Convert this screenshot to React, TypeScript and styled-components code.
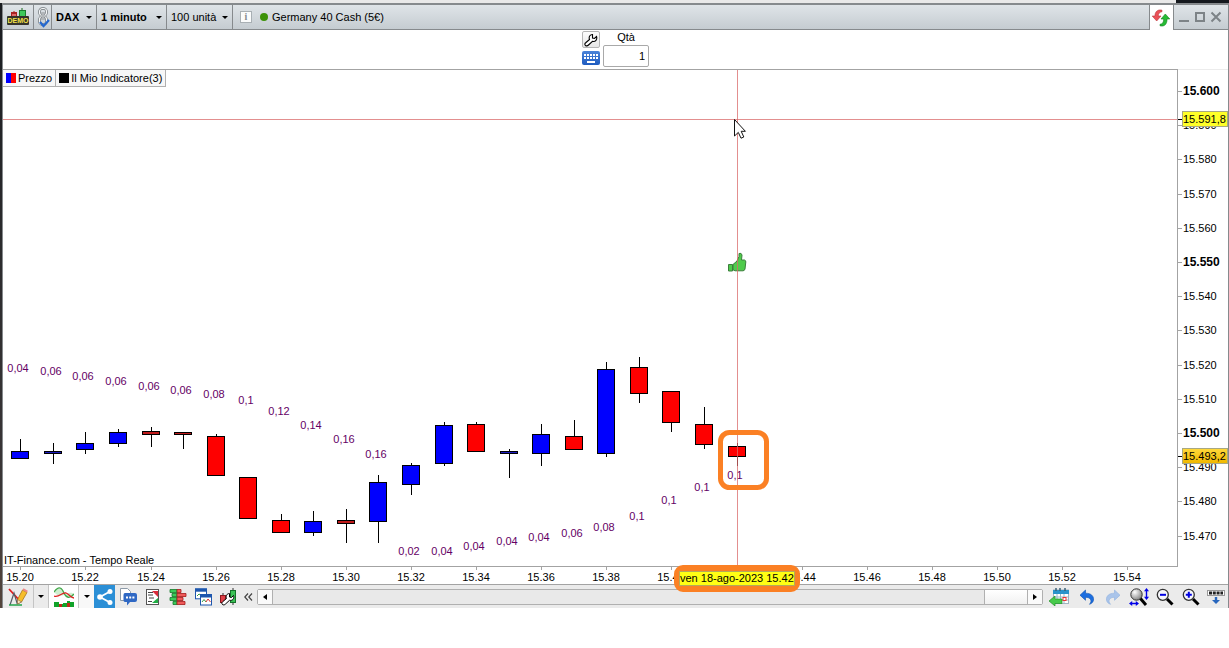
import React from "react";
import styled, { createGlobalStyle, css } from "styled-components";

const GlobalStyle = createGlobalStyle`
  *, *::before, *::after { box-sizing: border-box; }
  body {
    margin: 0;
    background: #fff;
    color: #000;
    font: 11px/14px "Liberation Sans", Arial, sans-serif;
  }
  button, input, select { font: inherit; color: inherit; }
  svg { display: block; flex: none; }
`;

const line = "#a3a3a3";
const frame = "#868a8d";

/* ---------- window ---------- */

const Desktop = styled.div`
  padding-left: 2px;
  background: linear-gradient(#1a1c20, #2b2b2d 40%, #3a3637 80%, #54453c) left / 2px 100% no-repeat;
`;

const TopStrip = styled.div`
  height: 3px;
  margin-left: -2px;
  background: linear-gradient(90deg, #e9e9e9 calc(100% - 53px), #15191e 0);
`;

const Window = styled.main`
  border: solid ${frame};
  border-width: 2px 1px 0;
  background: #fff;
`;

const Header = styled.header`
  display: flex;
  height: 25px;
`;

const headerCell = css`
  display: flex;
  align-items: center;
  border: 0 solid ${frame};
  border-width: 0 1px 1px 0;
  background: linear-gradient(#dfe4e8, #c5ccd1);
`;

const HeaderButton = styled.button<{ $width: number }>`
  ${headerCell}
  justify-content: center;
  width: ${(p) => p.$width}px;
  padding: 0;
`;

const SelectCell = styled.label<{ $width: number }>`
  ${headerCell}
  width: ${(p) => p.$width}px;
  padding: 0 4px;
`;

const Select = styled.select<{ $bold?: boolean }>`
  flex: 1;
  min-width: 0;
  padding: 0;
  border: 0;
  background: transparent;
  appearance: none;
  font-weight: ${(p) => (p.$bold ? 700 : 400)};
`;

const Instrument = styled.div`
  ${headerCell}
  flex: 1;
  padding-left: 7px;
`;

const InstrumentName = styled.span`
  margin-left: 4px;
`;

const StatusDot = styled.span`
  width: 8px;
  height: 8px;
  margin-left: 8px;
  border-radius: 50%;
  background: #3c9208;
`;

const InfoButton = styled.button`
  width: 12px;
  height: 12px;
  padding: 0;
  border: 1px solid #a9b0b4;
  background: #fbfcfc;
  color: #858b8f;
  font: bold 10px/10px "Liberation Serif", serif;
`;

const RefreshTab = styled.button`
  width: 24px;
  padding: 0 2px;
  border: 0;
  border-right: 1px solid ${frame};
  background: #fff;
`;

const WindowControls = styled.div`
  ${headerCell}
  border-right: 0;
  gap: 4px;
  padding: 0 6px 0 4px;
`;

const ControlButton = styled.button`
  padding: 0;
  border: 0;
  background: transparent;
`;

/* ---------- order bar ---------- */

const OrderBar = styled.section`
  display: flex;
  justify-content: center;
  gap: 3px;
  height: 39px;
`;

const OrderTools = styled.div`
  display: flex;
  flex-direction: column;
  gap: 3px;
  padding-top: 1px;
`;

const SettingsButton = styled.button`
  width: 18px;
  height: 17px;
  padding: 0;
  border: 1px solid #b5b5b5;
  border-radius: 2px;
  background: linear-gradient(#fdfdfd, #e6e6e6);
`;

const KeyboardButton = styled.button`
  width: 18px;
  height: 14px;
  padding: 0;
  border: 0;
  border-radius: 2px;
  background: linear-gradient(#4a83d8, #1f5cc0);
`;

const Quantity = styled.label`
  display: flex;
  flex-direction: column;
  align-items: center;
  gap: 1px;
  width: 46px;
`;

const QuantityInput = styled.input`
  width: 100%;
  height: 22px;
  padding: 0 3px;
  border: 1px solid #a9a9a9;
  border-radius: 2px;
  text-align: right;
`;

/* ---------- chart ---------- */

const ChartArea = styled.section`
  display: grid;
  grid-template-columns: minmax(0, 1fr) 50px;
`;

const Plot = styled.div`
  position: relative;
  border: solid ${line};
  border-width: 1px 1px 1px 0;
`;

const Legend = styled.div`
  position: absolute;
  top: 0;
  left: 0;
  display: flex;
`;

const LegendItem = styled.span`
  display: flex;
  align-items: center;
  gap: 2px;
  height: 17px;
  padding: 0 3px;
  border: solid #b0b0b0;
  border-width: 0 1px 1px 0;
  background: #f7f7f7;
`;

const Swatch = styled.i<{ $fill: string }>`
  width: 10px;
  height: 10px;
  background: ${(p) => p.$fill};
`;

const Credit = styled.span`
  position: absolute;
  left: 1px;
  bottom: -1px;
`;

const PriceAxis = styled.div`
  position: relative;
  border-top: 1px solid #ececec;
`;

const PriceTag = styled.output<{ $top: number; $fill: string }>`
  position: absolute;
  top: ${(p) => p.$top}px;
  left: 4px;
  right: 0;
  height: 16px;
  border: 1px solid #a8a882;
  background: ${(p) => p.$fill};
  line-height: 14px;
`;

const TimeAxis = styled.div`
  position: relative;
  grid-column: 1 / -1;
`;

const MarkedDate = styled.div`
  position: absolute;
  z-index: 1;
  top: -2px;
  left: 671px;
  padding: 1px 0;
  border: 5px solid #fb8024;
  border-radius: 9px;
  background: #fb8024;
`;

const DateTag = styled.output`
  display: block;
  height: 15px;
  border: 1px solid #b4a95a;
  background: #ffff14;
  line-height: 13px;
  white-space: nowrap;
`;

const AxisText = styled.text<{ $major?: boolean }>`
  font-family: "Liberation Sans", Arial, sans-serif;
  font-size: ${(p) => (p.$major ? 12 : 11)}px;
  font-weight: ${(p) => (p.$major ? 700 : 400)};
`;

const ValueText = styled.text`
  font-family: "Liberation Sans", Arial, sans-serif;
  font-size: 11px;
  fill: #650065;
  text-anchor: middle;
`;

/* ---------- bottom toolbar ---------- */

const Toolbar = styled.footer`
  display: flex;
  height: 24px;
  border-top: 1px solid ${line};
  background: #ebebeb;
`;

const ToolButton = styled.button<{ $width?: number; $fill?: string; $split?: boolean }>`
  display: flex;
  flex: none;
  align-items: center;
  justify-content: center;
  width: ${(p) => p.$width ?? 26}px;
  padding: 0;
  border: 0 solid #c4c4c4;
  border-right-width: ${(p) => (p.$split ? 1 : 0)}px;
  background: ${(p) => p.$fill ?? "transparent"};
`;

const ScrollBar = styled.div`
  display: flex;
  flex: 1;
  height: 16px;
  margin: 4px 1px;
  border: 1px solid #b0b0b0;
  border-radius: 2px;
  background: #e9e9e9;
`;

const ScrollButton = styled.button`
  display: flex;
  align-items: center;
  justify-content: center;
  width: 14px;
  padding: 0;
  border: 0;
  background: #fafafa;
`;

const ScrollTrack = styled.div`
  display: flex;
  flex: 1;
  justify-content: flex-end;
  border: solid #b0b0b0;
  border-width: 0 1px;
`;

const ScrollThumb = styled.div`
  width: 43px;
  border-left: 1px solid #b0b0b0;
  background: linear-gradient(#fff, #f1f1f1);
`;

/* ---------- data ---------- */

type Candle = {
  x: number;
  high: number;
  top: number;
  bottom: number;
  low: number;
  up: boolean;
  value: string;
  valueY: number;
};

const row = (
  x: number, high: number, top: number, bottom: number, low: number,
  up: boolean, value: string, valueY: number,
): Candle => ({ x, high, top, bottom, low, up, value, valueY });

const candles: Candle[] = [
  row(17, 369, 381, 389, 389, true, "0,04", 302),
  row(50, 373, 381, 384, 394, true, "0,06", 305),
  row(82, 362, 373, 380, 384, true, "0,06", 310),
  row(115, 359, 362, 374, 377, true, "0,06", 315),
  row(148, 357, 361, 365, 377, false, "0,06", 320),
  row(180, 362, 362, 365, 379, false, "0,06", 324),
  row(213, 364, 366, 406, 406, false, "0,08", 328),
  row(245, 407, 407, 449, 449, false, "0,1", 334),
  row(278, 444, 450, 463, 463, false, "0,12", 345),
  row(310, 441, 451, 463, 466, true, "0,14", 359),
  row(343, 439, 450, 454, 473, false, "0,16", 373),
  row(375, 405, 412, 452, 473, true, "0,16", 388),
  row(408, 393, 395, 415, 425, true, "0,02", 485),
  row(441, 352, 355, 394, 396, true, "0,04", 485),
  row(473, 352, 354, 382, 382, false, "0,04", 480),
  row(506, 379, 381, 384, 408, true, "0,04", 475),
  row(538, 354, 364, 384, 396, true, "0,04", 471),
  row(571, 350, 366, 380, 380, false, "0,06", 467),
  row(603, 292, 299, 384, 387, true, "0,08", 461),
  row(636, 287, 297, 324, 333, false, "0,1", 450),
  row(668, 321, 321, 353, 362, false, "0,1", 434),
  row(701, 337, 354, 375, 379, false, "0,1", 421),
  row(734, 373, 376, 387, 396, false, "0,1", 409),
];

const prices: [string, number][] = [
  ["15.600", 21], ["15.590", 55], ["15.580", 89], ["15.570", 124],
  ["15.560", 158], ["15.550", 192], ["15.540", 226], ["15.530", 260],
  ["15.520", 295], ["15.510", 329], ["15.500", 363], ["15.490", 397],
  ["15.480", 431], ["15.470", 466],
];

const majorPrices = ["15.600", "15.550", "15.500"];

const times: [string, number][] = [
  ["15.20", 17], ["15.22", 82], ["15.24", 148], ["15.26", 213], ["15.28", 278],
  ["15.30", 343], ["15.32", 408], ["15.34", 473], ["15.36", 538], ["15.38", 603],
  ["15.40", 668], ["15.44", 799], ["15.46", 864], ["15.48", 929], ["15.50", 994],
  ["15.52", 1059], ["15.54", 1124],
];

/* ---------- icons ---------- */

const Caret = () => (
  <svg width="6" height="3" aria-hidden="true"><path d="M0 0h6L3 3z" /></svg>
);

const DemoIcon = () => (
  <svg width="24" height="18" viewBox="0 0 24 18" aria-hidden="true">
    <path d="M5 4.500h6M8 3v2" stroke="#a22" />
    <rect x="5.500" y="5.500" width="5" height="4" fill="#e06a6a" stroke="#a22" />
    <path d="M16 0v3" stroke="#1b6b1b" />
    <rect x="13.500" y="2.500" width="6" height="7" fill="#3fc95a" stroke="#1d7c2f" />
    <rect x="1" y="8" width="22" height="9" rx="1" fill="#35332b" />
    <text x="12" y="15" textAnchor="middle" fill="#f3e34a" fontFamily="Liberation Sans" fontWeight="700" fontSize="7">DEMO</text>
  </svg>
);

const LinkIcon = () => (
  <svg width="14" height="22" viewBox="0 0 14 22" fill="none" aria-hidden="true">
    <rect x="3.500" y="2.500" width="7" height="7" rx="3" stroke="#70767a" strokeWidth="2.600" />
    <rect x="3.500" y="10.500" width="7" height="8" rx="3" stroke="#70767a" strokeWidth="2.600" />
    <rect x="3.500" y="2.500" width="7" height="7" rx="3" stroke="#f4f6f7" strokeWidth="1.200" />
    <rect x="3.500" y="10.500" width="7" height="8" rx="3" stroke="#f4f6f7" strokeWidth="1.200" />
    <path d="M7 6v8" stroke="#70767a" strokeWidth="2.600" />
    <path d="M7 6v8" stroke="#f4f6f7" />
    <path d="M4 16l3.500 4L13 14" stroke="#2468cf" strokeWidth="2.200" />
  </svg>
);

const RefreshIcon = () => (
  <svg width="18" height="18" viewBox="0 0 18 18" aria-hidden="true">
    <path d="M10 1.200C5.500 0 2.800 3 3 7H.2l4.500 5L9 7H6.300C6.200 5 7.300 3 10 2.700z" fill="#ea5158" stroke="#b9373d" strokeWidth=".6" />
    <path d="M8 16.800c4.500 1.200 7.200-1.800 7-6.800h2.800l-4.500-5L9 10h2.700c.1 3-1 5-3.700 5.300z" fill="#26bb34" stroke="#138020" strokeWidth=".6" />
  </svg>
);

const ControlIcon = ({ d }: { d: string }) => (
  <svg width="12" height="12" viewBox="0 0 12 12" fill="none" stroke="#7d8387" strokeWidth="2" aria-hidden="true"><path d={d} /></svg>
);

const wrenchPath = "M2.500 13.500c-1-1-.8-2 .2-2.800L6.500 7.500C5.500 4.800 7 2.500 9.500 2.500V6l2 .5L13.500 4.500c1 3-1 5.500-4 4.800L5.500 13c-1 1-2 1.200-3 .5z";

const WrenchIcon = () => (
  <svg width="16" height="15" viewBox="0 0 16 15" aria-hidden="true">
    <path d={wrenchPath} fill="#fff" stroke="#000" strokeWidth="1.100" />
  </svg>
);

const KeyboardIcon = () => (
  <svg width="18" height="14" viewBox="0 0 18 14" stroke="#fff" strokeWidth="2" aria-hidden="true">
    <path d="M2 4h14M2 7h14" strokeDasharray="2 1" /><path d="M5 11h8" />
  </svg>
);

const PencilIcon = () => (
  <svg width="20" height="20" viewBox="0 0 20 20" fill="none" aria-hidden="true">
    <path d="M1 2l11 12" stroke="#e01b1b" strokeWidth="1.800" />
    <path d="M2 18L6 6l3 10 4-7" stroke="#555d66" strokeWidth="1.200" />
    <path d="M1 18h13" stroke="#20a44a" strokeWidth="1.500" />
    <path d="M9.500 12.500L14.500 3l4.500 2.500-5.500 9.500-4 2z" fill="#f6bd2a" stroke="#a8741a" strokeWidth=".8" />
    <path d="M14.500 3l1-1.800 4.300 2.500L19 5.500z" fill="#e88" />
    <path d="M9.500 12.500v4.500l4-2z" fill="#fbe3bd" stroke="#654" strokeWidth=".5" />
  </svg>
);

const IndicatorIcon = () => (
  <svg width="20" height="20" viewBox="0 0 20 20" fill="none" aria-hidden="true">
    <path d="M0 5c5-7 8-4 10 1s6 6 10 2v-1c-4-3-7 0-10 1S4 10 0 5z" fill="#cfeed0" />
    <path d="M0 5c5-7 8-4 10 1s6 6 10 1" stroke="#42a84a" strokeWidth="1.300" />
    <path d="M0 9c5 2 8-4 12-3 3 1 4 4 8 5" stroke="#d22" strokeWidth="1.300" />
    <path d="M0 20v-5h5v2h4v-1h4v-2h3v1h4v5z" fill="#12a32a" />
    <path d="M5 20v-3h3v3zM13 20v-4h3v4z" fill="#c02a1c" />
  </svg>
);

const ShareIcon = () => (
  <svg width="18" height="18" viewBox="0 0 18 18" aria-hidden="true">
    <path d="M14 3.500L4 9l10 5.500" fill="none" stroke="#fff" strokeWidth="1.800" />
    <circle cx="4" cy="9" r="2.800" fill="#fff" /><circle cx="14" cy="3.500" r="2.500" fill="#fff" /><circle cx="14" cy="14.500" r="2.500" fill="#fff" />
  </svg>
);

const ChatIcon = () => (
  <svg width="18" height="18" viewBox="0 0 18 18" aria-hidden="true">
    <path d="M1.500.5h7l3 3v9h-10z" fill="#fff" stroke="#8d9aa8" />
    <path d="M6 5h10q2 0 2 2v5q0 2-2 2h-5l-3 3.500V14H6q-1.500 0-1.500-2V7Q4.500 5 6 5z" fill="#2f68c4" />
    <path d="M7 9.500h8.500" stroke="#fff" strokeWidth="2" strokeDasharray="2 1.200" />
  </svg>
);

const ReportIcon = () => (
  <svg width="14" height="16" viewBox="0 0 14 16" aria-hidden="true">
    <rect x=".5" y=".5" width="12" height="15" fill="#fff" stroke="#555" />
    <path d="M2 3.500h5M2 6h5M3 9h5M2 12.500h4" stroke="#444" />
    <path d="M6 2h6v6L9.500 5.500z" fill="#da2b3a" />
    <path d="M6 14h6V9l-2.500 2z" fill="#1fae44" />
  </svg>
);

const DepthIcon = () => (
  <svg width="18" height="18" viewBox="0 0 18 18" strokeWidth=".8" aria-hidden="true">
    <path d="M1 1.500h7v3H1zM3 5.500h5v3H3zM1 9.500h7v3H1zM4 13.500h4v3H4z" fill="#3acb5a" stroke="#137a2a" />
    <path d="M8 1.500h4v3H8zM8 5.500h9v3H8zM8 9.500h6v3H8zM8 13.500h8v3H8z" fill="#ef5a5a" stroke="#a31b1b" />
  </svg>
);

const WindowsIcon = () => (
  <svg width="19" height="18" viewBox="0 0 19 18" fill="none" aria-hidden="true">
    <rect x="1.500" y=".8" width="11" height="10" fill="#fff" stroke="#1e57ae" />
    <path d="M1 2.200h12" stroke="#1e57ae" strokeWidth="3" />
    <path d="M3 8l2-2 3 2" stroke="#3a9a46" />
    <rect x="6.500" y="6.500" width="11" height="10.500" fill="#fff" stroke="#1e57ae" />
    <path d="M6 8h12" stroke="#1e57ae" strokeWidth="3" />
    <path d="M8 14l2-2.500 2 2.500" stroke="#3a9a46" /><path d="M12 14l2-3 2.500 3" stroke="#d33" />
  </svg>
);

const CandleWrenchIcon = () => (
  <svg width="18" height="18" viewBox="0 0 18 18" aria-hidden="true">
    <path d="M4 5v12M14 0v17" stroke="#333" />
    <rect x="1.500" y="7.500" width="5" height="7" fill="#e03e46" stroke="#8b1a1f" />
    <rect x="11.500" y="2.500" width="5" height="12" fill="#3ac356" stroke="#15702a" />
    <path d={wrenchPath} transform="translate(1 3)" fill="#fff" stroke="#000" />
  </svg>
);

const CollapseIcon = () => (
  <svg width="9" height="8" viewBox="0 0 9 8" fill="none" stroke="#444" aria-hidden="true">
    <path d="M4 .5L.8 4 4 7.500M8 .5L4.800 4 8 7.500" strokeWidth="1.200" />
  </svg>
);

const CalendarIcon = () => (
  <svg width="20" height="18" viewBox="0 0 20 18" aria-hidden="true">
    <rect x="4.500" y="2" width="15" height="13.500" fill="#fff" stroke="#9fb4c2" />
    <path d="M4 2h16v4H4z" fill="#2a93cb" />
    <path d="M7 0v3M11 0v3M16 0v3" stroke="#3b6077" strokeWidth="1.500" />
    <path d="M5 9h14M5 12h14M8 6v9M11.500 6v9M15 6v9" stroke="#9ab8c8" />
    <rect x="14" y="9.500" width="3" height="3" fill="#fff" stroke="#e33" />
    <path d="M0 13l6-5v3h7v4.500H6V18z" fill="#47ca4c" stroke="#239229" strokeWidth=".7" />
  </svg>
);

const UndoIcon = ({ redo }: { redo?: boolean }) => (
  <svg width="16" height="16" viewBox="0 0 16 16" aria-hidden="true">
    <path
      d="M1 6.200L6.500 1v3.200C12 4.200 15 7 14.500 11c-.3 2-1.700 3.600-4 4.300 1.500-1.800 1.900-3.300 1-4.800C10.700 9 9 8.300 6.500 8.300v3z"
      transform={redo ? "matrix(-1 0 0 1 16 0)" : undefined}
      fill={redo ? "#a9c4ea" : "#1c6ee0"}
      stroke={redo ? "#8fb0df" : "#0c4fae"}
      strokeWidth=".6"
    />
  </svg>
);

const ZoomIcon = ({ sign }: { sign: string }) => (
  <svg width="18" height="18" viewBox="0 0 18 18" fill="none" aria-hidden="true">
    <path d="M11 11l5.500 5.500" stroke="#000" strokeWidth="3" />
    <circle cx="6.800" cy="6.800" r="5.500" fill="#f6f6fa" stroke="#333" strokeWidth="1.300" />
    <path d={sign} stroke="#0000e0" strokeWidth="2" />
  </svg>
);

const ZoomFitIcon = () => (
  <svg width="20" height="18" viewBox="0 0 20 18" fill="none" aria-hidden="true">
    <defs>
      <radialGradient id="lens" cx=".35" cy=".3" r=".8">
        <stop offset="0" stopColor="#fff" /><stop offset="1" stopColor="#777" />
      </radialGradient>
    </defs>
    <path d="M11 10l6 7" stroke="#000" strokeWidth="3" />
    <circle cx="7.500" cy="6.500" r="5.700" fill="url(#lens)" stroke="#333" />
    <path d="M17.500 2v8M2 15.500h6" stroke="#0000e8" strokeWidth="1.400" />
    <path d="M17.500 0l2.500 3.200h-5zM17.500 12l2.500-3.200h-5zM0 15.500L3.200 13v5zM10 15.500L6.800 13v5z" fill="#0000e8" />
  </svg>
);

const KeypadIcon = () => (
  <svg width="18" height="16" viewBox="0 0 18 16" aria-hidden="true">
    <rect x=".5" y="1.500" width="17" height="5" fill="#fff" stroke="#999" />
    <path d="M2 4h14" stroke="#222" strokeWidth="3" strokeDasharray="3 .8" />
    <path d="M7.800 8h2.400v3h2.800L9 15l-4-4h2.800z" fill="#2867be" />
  </svg>
);

/* ---------- views ---------- */

function CandleShape({ x, high, top, bottom, low, up }: Candle) {
  const thin = bottom - top < 5;
  const fill = up ? (thin ? "#1b1bc0" : "#0000fe") : thin ? "#c01b1b" : "#fe0000";
  return (
    <g stroke="#000" shapeRendering="crispEdges">
      <line x1={x + 0.5} x2={x + 0.5} y1={high} y2={low} />
      <rect x={x - 8.5} y={top + 0.5} width={17} height={bottom - top - 1} fill={fill} />
    </g>
  );
}

function PlotDrawing() {
  return (
    <svg width="100%" height="496" role="img" aria-label="DAX, 1 minuto">
      {candles.map((c) => (
        <g key={c.x}>
          <CandleShape {...c} />
          <ValueText x={c.x - 2} y={c.valueY}>{c.value}</ValueText>
        </g>
      ))}
      <path
        d="M725.500 194.500h4v6.500h-4zM730 194.500l4-3.500 2-4.500v-3q2.500-1 3 1.500l-.5 5h3q1.500.5 1.300 2l-.8 7q-.5 1.800-2 1.800h-8l-2-1z"
        fill="#4fcb4b" stroke="#3c7f3d"
      />
      <g fill="#d96a6a" fillOpacity=".75">
        <rect x="734" y="0" width="1" height="100%" />
        <rect x="0" y="49" width="100%" height="1" />
      </g>
      <rect x="717.500" y="362.500" width="46" height="55" rx="9" fill="none" stroke="#fb8024" strokeWidth="5" />
      <path d="M731.500 49.500v16.500l3.800-3.600 2.700 5.800 2.800-1.200-2.600-5.700h4.200z" fill="#fff" stroke="#111" />
    </svg>
  );
}

export default function App() {
  return (
    <>
      <GlobalStyle />
      <Desktop>
        <TopStrip />
        <Window>
          <Header>
            <HeaderButton $width={31} aria-label="Demo"><DemoIcon /></HeaderButton>
            <HeaderButton $width={18} aria-label="Collega"><LinkIcon /></HeaderButton>
            <SelectCell $width={45}>
              <Select $bold aria-label="Strumento"><option>DAX</option></Select><Caret />
            </SelectCell>
            <SelectCell $width={70}>
              <Select $bold aria-label="Intervallo"><option>1 minuto</option></Select><Caret />
            </SelectCell>
            <SelectCell $width={66}>
              <Select aria-label="Numero di unità"><option>100 unità</option></Select><Caret />
            </SelectCell>
            <Instrument>
              <InfoButton aria-label="Informazioni">i</InfoButton>
              <StatusDot />
              <InstrumentName>Germany 40 Cash (5€)</InstrumentName>
            </Instrument>
            <RefreshTab aria-label="Aggiorna"><RefreshIcon /></RefreshTab>
            <WindowControls>
              <ControlButton aria-label="Riduci"><ControlIcon d="M1 10h10" /></ControlButton>
              <ControlButton aria-label="Ingrandisci"><ControlIcon d="M2 2h8v8H2z" /></ControlButton>
              <ControlButton aria-label="Chiudi"><ControlIcon d="M1.500 1.500l9 9M10.500 1.500l-9 9" /></ControlButton>
            </WindowControls>
          </Header>

          <OrderBar>
            <OrderTools>
              <SettingsButton aria-label="Impostazioni"><WrenchIcon /></SettingsButton>
              <KeyboardButton aria-label="Tastiera"><KeyboardIcon /></KeyboardButton>
            </OrderTools>
            <Quantity>
              Qtà
              <QuantityInput defaultValue="1" />
            </Quantity>
          </OrderBar>

          <ChartArea>
            <Plot>
              <PlotDrawing />
              <Legend>
                <LegendItem><Swatch $fill="linear-gradient(90deg, #00f 50%, #f00 50%)" />Prezzo</LegendItem>
                <LegendItem><Swatch $fill="#000" />Il Mio Indicatore(3)</LegendItem>
              </Legend>
              <Credit>IT-Finance.com - Tempo Reale</Credit>
            </Plot>
            <PriceAxis>
              <svg width="100%" height="496" role="img" aria-label="Prezzi">
                {prices.map(([label, y]) => (
                  <g key={label}>
                    <line x1="0" x2="4" y1={y + 0.5} y2={y + 0.5} stroke={line} />
                    <AxisText x="5" y={y + 4} $major={majorPrices.includes(label)}>{label}</AxisText>
                  </g>
                ))}
                <path d="M0 49.500h4M0 386.500h4" stroke="#000" />
              </svg>
              <PriceTag $top={41} $fill="#ffff28">15.591,8</PriceTag>
              <PriceTag $top={378} $fill="linear-gradient(#ffd83a, #f0b800)">15.493,2</PriceTag>
            </PriceAxis>
            <TimeAxis>
              <svg width="100%" height="17" role="img" aria-label="Orari">
                {times.map(([label, x]) => (
                  <g key={label}>
                    <line x1={x + 0.5} x2={x + 0.5} y1="0" y2="3" stroke={line} />
                    <AxisText x={x} y="14" textAnchor="middle">{label}</AxisText>
                  </g>
                ))}
              </svg>
              <MarkedDate><DateTag>ven 18-ago-2023 15.42</DateTag></MarkedDate>
            </TimeAxis>
          </ChartArea>

          <Toolbar>
            <ToolButton $width={31} $split aria-label="Disegna"><PencilIcon /></ToolButton>
            <ToolButton $width={15} $split aria-label="Altri strumenti"><Caret /></ToolButton>
            <ToolButton $width={30} $split $fill="#fff" aria-label="Indicatori"><IndicatorIcon /></ToolButton>
            <ToolButton $width={15} $fill="#f8f8f8" aria-label="Altri indicatori"><Caret /></ToolButton>
            <ToolButton $width={21} $fill="#2b8fd6" aria-label="Condividi"><ShareIcon /></ToolButton>
            <ToolButton aria-label="Commenti"><ChatIcon /></ToolButton>
            <ToolButton $width={24} aria-label="Rapporto"><ReportIcon /></ToolButton>
            <ToolButton aria-label="Profondità"><DepthIcon /></ToolButton>
            <ToolButton $width={24} aria-label="Finestre"><WindowsIcon /></ToolButton>
            <ToolButton aria-label="Opzioni grafico"><CandleWrenchIcon /></ToolButton>
            <ToolButton $width={15} aria-label="Comprimi"><CollapseIcon /></ToolButton>
            <ScrollBar>
              <ScrollButton aria-label="Indietro"><svg width="4" height="6" aria-hidden="true"><path d="M4 0v6L0 3z" /></svg></ScrollButton>
              <ScrollTrack><ScrollThumb /></ScrollTrack>
              <ScrollButton aria-label="Avanti"><svg width="4" height="6" aria-hidden="true"><path d="M0 0v6l4-3z" /></svg></ScrollButton>
            </ScrollBar>
            <ToolButton $width={30} aria-label="Vai alla data"><CalendarIcon /></ToolButton>
            <ToolButton aria-label="Annulla"><UndoIcon /></ToolButton>
            <ToolButton aria-label="Ripeti"><UndoIcon redo /></ToolButton>
            <ToolButton aria-label="Adatta"><ZoomFitIcon /></ToolButton>
            <ToolButton aria-label="Riduci zoom"><ZoomIcon sign="M4 6.800h6" /></ToolButton>
            <ToolButton aria-label="Aumenta zoom"><ZoomIcon sign="M3.800 6.800h6M6.800 3.800v6" /></ToolButton>
            <ToolButton $width={24} aria-label="Nascondi barra"><KeypadIcon /></ToolButton>
          </Toolbar>
        </Window>
      </Desktop>
    </>
  );
}
